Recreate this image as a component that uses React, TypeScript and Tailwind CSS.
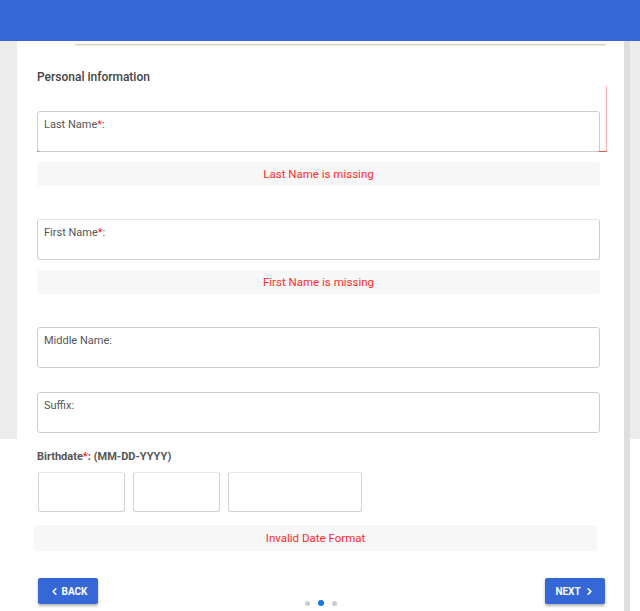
import React from "react";
import { ChevronLeft, ChevronRight } from "lucide-react";

const font = { fontFamily: "Roboto, 'Liberation Sans', sans-serif" };

function Field({ label, required, topLight }: { label: string; required?: boolean; topLight?: boolean }) {
  return (
    <div
      className={`h-[41px] w-[563px] rounded-[3px] border border-[#cdcdcd] bg-white pl-[6px] pt-[6px] text-[11px] leading-[14px] text-[#555] ${
        topLight ? "border-t-[#e6e6e6]" : ""
      }`}
    >
      {label}
      {required && <span className="text-[#ff1a1a]">*</span>}:
    </div>
  );
}

function ErrorBox({ text, extra }: { text: string; extra?: string }) {
  return (
    <div
      className={`flex h-[24px] w-[563px] items-center justify-center rounded-[3px] bg-[#f7f7f7] pt-[1px] text-[11.5px] text-[#ff2a2a] ${extra ?? ""}`}
    >
      {text}
    </div>
  );
}

export default function App() {
  return (
    <div
      className="relative h-[611px] w-[640px] overflow-hidden bg-[linear-gradient(to_bottom,#ececec_439px,#ffffff_439px)]"
      style={font}
    >
      <div className="relative z-10 h-[41px] w-full bg-[#3667d6]" />
      <div className="ml-[17px] flex h-[570px] w-[607px] flex-col bg-white pl-[20px] shadow-[6px_0_0_0_#dedede]">
        <div className="ml-[38px] h-[3px] w-[531px] bg-white shadow-[0_1px_2px_rgba(0,0,0,0.25)]" />
        <div className="mt-[25px] text-[12px] font-medium leading-[16px] text-[#444]">Personal information</div>

        <div className="mt-[1px] h-[66px] w-[570px] border-b border-r border-b-[#ee5555] border-r-[#ffb3b3] pt-[25px]">
          <Field label="Last Name" required />
        </div>
        <ErrorBox text="Last Name is missing" extra="mt-[10px]" />

        <div className="mt-[33px]">
          <Field label="First Name" required topLight />
        </div>
        <ErrorBox text="First Name is missing" extra="mt-[10px]" />

        <div className="mt-[33px]">
          <Field label="Middle Name" />
        </div>
        <div className="mt-[24px]">
          <Field label="Suffix" />
        </div>

        <div className="mt-[17px] text-[11px] font-bold leading-[14px] text-[#555]">
          Birthdate<span className="text-[#ff1a1a]">*</span>: (MM-DD-YYYY)
        </div>
        <div className="mt-[8px] flex gap-[8px] pl-[1px]">
          <div className="h-[40px] w-[87px] rounded-[3px] border border-[#d2d2d2] border-t-[#e6e6e6]" />
          <div className="h-[40px] w-[87px] rounded-[3px] border border-[#d2d2d2] border-t-[#e6e6e6]" />
          <div className="h-[40px] w-[134px] rounded-[3px] border border-[#d2d2d2] border-t-[#e6e6e6]" />
        </div>
        <div className="-ml-[3px] mt-[13px] flex h-[26px] w-[563px] items-center justify-center rounded-[4px] bg-[#f7f7f7] pt-[1px] text-[11.5px] text-[#ff2a2a]">
          Invalid Date Format
        </div>

        <div className="mt-[27px] flex w-[568px] items-start justify-between pl-[1px]">
          <button className="flex h-[26px] w-[60px] items-center justify-center gap-[2px] rounded-[2px] bg-[#3667d6] text-[10px] font-bold text-white shadow-[0_2px_3px_rgba(0,0,0,0.3)]">
            <ChevronLeft size={11} strokeWidth={3.5} />
            BACK
          </button>
          <div className="mt-[22px] flex items-center gap-[8px] pr-[2px]">
            <span className="h-[5px] w-[5px] rounded-full bg-[#cccccc]" />
            <span className="h-[6px] w-[6px] rounded-full bg-[#1574ee]" />
            <span className="h-[5px] w-[5px] rounded-full bg-[#cccccc]" />
          </div>
          <button className="flex h-[26px] w-[60px] items-center justify-center gap-[3px] rounded-[2px] bg-[#3667d6] text-[10px] font-bold text-white shadow-[0_2px_3px_rgba(0,0,0,0.3)]">
            NEXT
            <ChevronRight size={11} strokeWidth={3.5} />
          </button>
        </div>
      </div>
    </div>
  );
}
